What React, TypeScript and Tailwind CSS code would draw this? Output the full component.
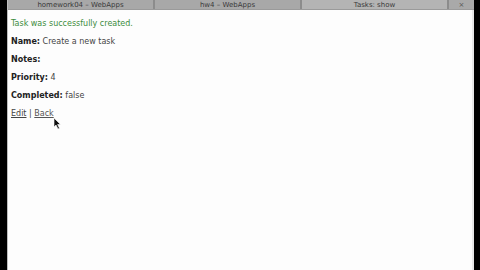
export default function App() {
  const tabs = [
    { label: 'homework04 – WebApps', active: false },
    { label: 'hw4 – WebApps', active: false },
    { label: 'Tasks: show', active: true },
  ];
  return (
    <div className="flex h-[270px] w-[480px] overflow-hidden bg-black font-['DejaVu_Sans',sans-serif]">
      <div className="w-[7px] shrink-0 bg-black" />
      <div className="flex w-[467px] shrink-0 flex-col border-l border-[#bdbdbd] bg-[#fdfdfd]">
        {/* tab bar */}
        <div className="flex h-[10px] shrink-0 items-stretch border-b border-[#9a9a9a] bg-[#a9a9a9] text-[7px] leading-[8px] text-[#3a3a3a]">
          {tabs.map((t) => (
            <div
              key={t.label}
              className={`flex w-[147px] items-center justify-center overflow-hidden whitespace-nowrap border-r-2 border-[#8c8c8c] ${
                t.active ? 'bg-[#b4b4b4]' : 'bg-[#a8a8a8]'
              }`}
            >
              {t.label}
            </div>
          ))}
          <div className="flex flex-1 items-center justify-center text-[7px] text-[#555]">×</div>
        </div>
        {/* page */}
        <div className="relative flex flex-1 border-r-2 border-[#e8e8e8]">
          <div className="flex flex-col gap-[8px] pl-[3px] pt-[9px] text-[8px] leading-[10px] text-[#444]">
            <p className="text-[#3c8c3c]">Task was successfully created.</p>
            <p>
              <b className="text-[#222]">Name:</b> Create a new task
            </p>
            <p>
              <b className="text-[#222]">Notes:</b>
            </p>
            <p>
              <b className="text-[#222]">Priority:</b> 4
            </p>
            <p>
              <b className="text-[#222]">Completed:</b> false
            </p>
            <p>
              <span className="underline">Edit</span> | <span className="text-[#555] underline">Back</span>
            </p>
          </div>
          {/* mouse pointer */}
          <svg className="absolute left-[45px] top-[107px]" width="9" height="13" viewBox="0 0 9 13">
            <path d="M1 1 L1 10 L3 8 L5 12 L6.5 11.3 L4.6 7.5 L7.5 7.5 Z" fill="#111" stroke="#fff" strokeWidth="0.6" />
          </svg>
        </div>
      </div>
    </div>
  );
}
